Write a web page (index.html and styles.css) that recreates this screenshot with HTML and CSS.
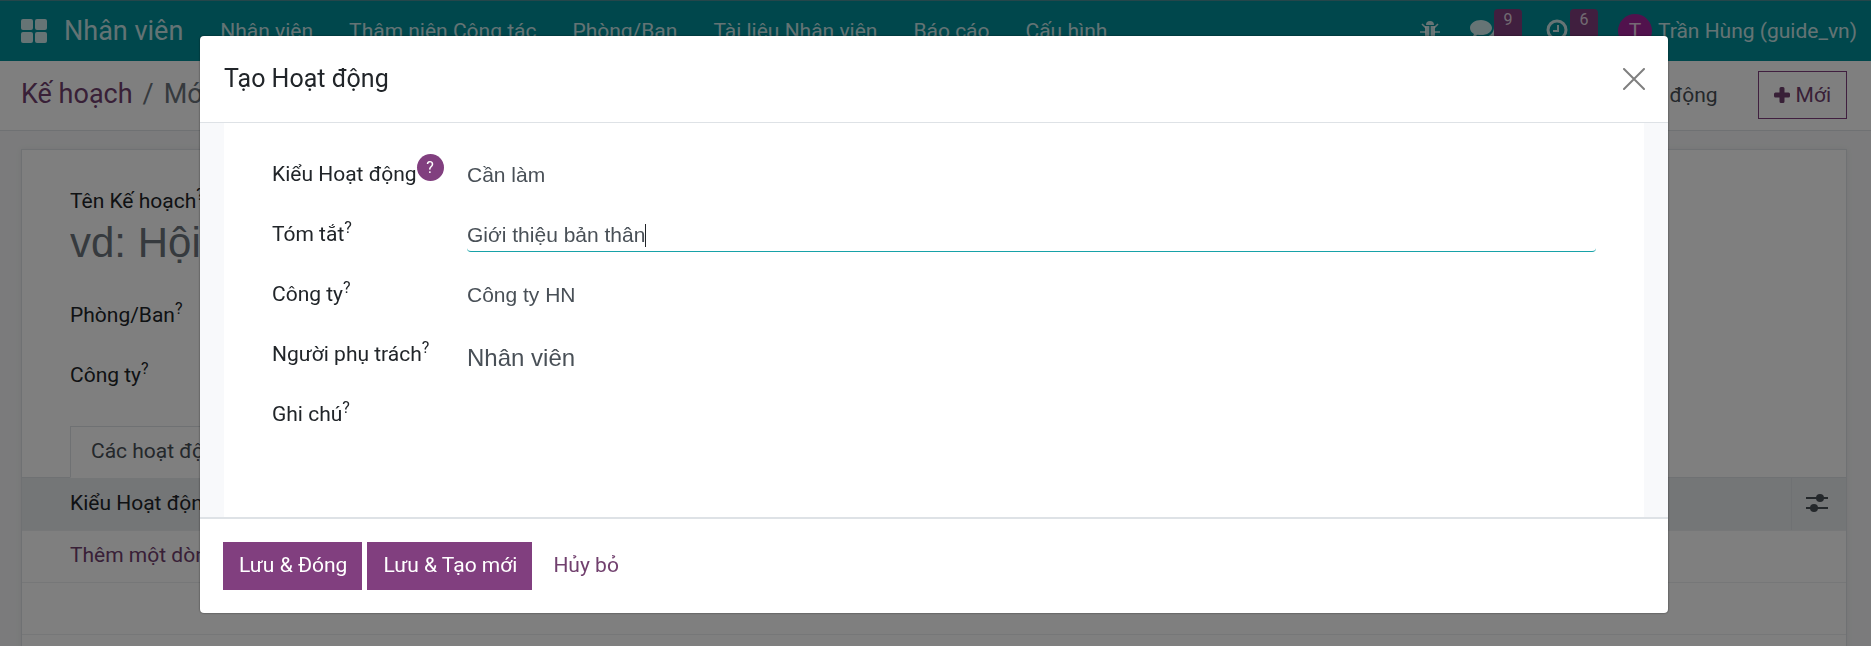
FILE: index.html
```html
<!DOCTYPE html>
<html lang="vi">
<head>
    <meta charset="UTF-8">
    <meta name="viewport" content="width=device-width, initial-scale=1.0">
    <title>Kế hoạch - Nhân viên</title>
    <link rel="stylesheet" href="styles.css">
</head>
<body>
    <div class="app">
        <header class="navbar">
            <button type="button" class="apps-menu" aria-label="Ứng dụng">
                <svg width="26" height="26" viewBox="0 0 26 26" fill="currentColor">
                    <rect x="0" y="1" width="12" height="11" rx="2"/>
                    <rect x="14" y="1" width="12" height="11" rx="2"/>
                    <rect x="0" y="14" width="12" height="11" rx="2"/>
                    <rect x="14" y="14" width="12" height="11" rx="2"/>
                </svg>
            </button>
            <a href="#" class="brand">Nhân viên</a>
            <nav class="menu">
                <a href="#">Nhân viên</a>
                <a href="#">Thâm niên Công tác</a>
                <a href="#">Phòng/Ban</a>
                <a href="#">Tài liệu Nhân viên</a>
                <a href="#">Báo cáo</a>
                <a href="#">Cấu hình</a>
            </nav>
            <div class="systray">
                <button type="button" class="tray-item" aria-label="Gỡ lỗi">
                    <svg width="20" height="22" viewBox="0 0 20 22" fill="currentColor">
                        <path d="M6 5a4 4 0 0 1 8 0z"/>
                        <path d="M5 6h4.300v14C6.500 20 5 17.500 5 14zM10.700 6H15v8c0 3.500-1.500 6-4.300 6z"/>
                        <path d="M2 4l4 4M18 4l-4 4M0 12h6M20 12h-6M2 20l4-4M18 20l-4-4" stroke="currentColor" stroke-width="1.600"/>
                    </svg>
                </button>
                <button type="button" class="tray-item has-badge" aria-label="Hội thoại">
                    <svg width="28" height="24" viewBox="0 0 28 24" fill="currentColor">
                        <path d="M11 1C5 1 0 4.500 0 9c0 2.500 1.600 4.600 4 6-.4 1.300-1.100 2.200-2 3 2.300-.1 4.200-1 5.600-2.200 1.100.2 2.200.3 3.400.3 6 0 11-3.200 11-7.100S17 1 11 1z"/>
                        <path d="M24 8c.3 5.800-5 10.500-12 11 2 1.300 4.500 2 7 2 1 0 2-.1 3-.3 1.300 1.100 3 1.900 5 2-.8-.8-1.400-1.700-1.700-2.800C27 18.800 28 17 28 14.800 28 12 26.500 9.500 24 8z"/>
                    </svg>
                    <span class="badge">9</span>
                </button>
                <button type="button" class="tray-item has-badge" aria-label="Hoạt động">
                    <svg width="24" height="24" viewBox="0 0 24 24" fill="none" stroke="currentColor">
                        <circle cx="11" cy="11" r="9" stroke-width="3"/>
                        <path d="M12 6v6H7" stroke-width="2"/>
                    </svg>
                    <span class="badge">6</span>
                </button>
                <button type="button" class="user-menu"><span class="avatar">T</span>Trần Hùng (guide_vn)</button>
            </div>
        </header>

        <div class="control-panel">
            <div class="breadcrumb">
                <a href="#">Kế hoạch</a>
                <span class="separator">/</span>
                <span>Mới</span>
            </div>
            <div class="actions">
                <button type="button" class="action-menu">Hành động</button>
                <button type="button" class="btn-new">
                    <svg width="16" height="16" viewBox="0 0 16 16" fill="currentColor">
                        <path d="M7 0h2q1.500 0 1.500 1.500v4h4Q16 5.500 16 7v2q0 1.500-1.500 1.500h-4v4Q10.500 16 9 16H7q-1.500 0-1.500-1.500v-4h-4Q0 10.500 0 9V7q0-1.500 1.500-1.500h4v-4Q5.500 0 7 0z"/>
                    </svg>
                    Mới
                </button>
            </div>
        </div>

        <main class="content">
            <div class="sheet">
                <div class="sheet-fields">
                    <label for="planName">Tên Kế hoạch<sup>?</sup></label>
                    <input type="text" id="planName" class="plan-name" placeholder="vd: Hội nhập">
                    <div class="plan-row">
                        <label for="planDepartment">Phòng/Ban<sup>?</sup></label>
                        <input type="text" id="planDepartment">
                    </div>
                    <div class="plan-row">
                        <label for="planCompany">Công ty<sup>?</sup></label>
                        <input type="text" id="planCompany">
                    </div>
                </div>
                <div class="tabs">
                    <a href="#" class="tab">Các hoạt động</a>
                </div>
                <table class="activity-table">
                    <thead>
                        <tr>
                            <th>Kiểu Hoạt động</th>
                            <th class="optional">
                                <svg width="22" height="18" viewBox="0 0 22 18" fill="currentColor">
                                    <path d="M0 3h22v2H0zM0 13h22v2H0z"/>
                                    <circle cx="14" cy="4" r="4"/>
                                    <circle cx="8" cy="14" r="4"/>
                                </svg>
                            </th>
                        </tr>
                    </thead>
                    <tbody>
                        <tr><td colspan="2"><a href="#">Thêm một dòng</a></td></tr>
                        <tr><td colspan="2"></td></tr>
                        <tr><td colspan="2"></td></tr>
                    </tbody>
                </table>
            </div>
        </main>
    </div>

    <div class="backdrop">
        <div class="modal" role="dialog" aria-labelledby="modalTitle">
            <div class="modal-header">
                <h4 id="modalTitle">Tạo Hoạt động</h4>
                <button type="button" class="close" aria-label="Đóng">
                    <svg width="22" height="22" viewBox="0 0 22 22" fill="none" stroke="currentColor" stroke-width="2" stroke-linecap="round">
                        <path d="M1 1l20 20M21 1L1 21"/>
                    </svg>
                </button>
            </div>
            <div class="modal-body">
                <form id="activityForm" class="activity-form">
                    <div class="form-row">
                        <label for="activityType">Kiểu Hoạt động<sup class="help">?</sup></label>
                        <div class="field"><input type="text" id="activityType" value="Cần làm"></div>
                    </div>
                    <div class="form-row">
                        <label for="summary">Tóm tắt<sup>?</sup></label>
                        <div class="field focused">
                            <input type="text" id="summary" value="Giới thiệu bản thân">
                            <span class="caret"></span>
                        </div>
                    </div>
                    <div class="form-row">
                        <label for="company">Công ty<sup>?</sup></label>
                        <div class="field"><input type="text" id="company" value="Công ty HN"></div>
                    </div>
                    <div class="form-row">
                        <label for="responsible">Người phụ trách<sup>?</sup></label>
                        <div class="field"><input type="text" id="responsible" class="large" value="Nhân viên"></div>
                    </div>
                    <div class="form-row note-row">
                        <label for="note">Ghi chú<sup>?</sup></label>
                        <div class="field"><textarea id="note"></textarea></div>
                    </div>
                </form>
            </div>
            <div class="modal-footer">
                <button type="submit" form="activityForm" class="btn btn-primary">Lưu &amp; Đóng</button>
                <button type="button" class="btn btn-primary">Lưu &amp; Tạo mới</button>
                <button type="button" class="btn btn-link">Hủy bỏ</button>
            </div>
        </div>
    </div>
</body>
</html>
```

FILE: styles.css
```css
:root {
    --nav-color: #008f99;
    --primary-color: #813f7f;
    --link-color: #71406e;
    --text-color: #212529;
    --muted-color: #495057;
    --border-color: #dee2e6;
    --background-color: #f6f7f8;
}

* {
    box-sizing: border-box;
}

body {
    margin: 0;
    font-family: Roboto, sans-serif;
    font-size: 21px;
    line-height: 32px;
    color: var(--text-color);
    background-color: var(--background-color);
}

a {
    color: var(--link-color);
    text-decoration: none;
}

button {
    padding: 0;
    border: none;
    background: none;
    color: inherit;
    font: inherit;
    cursor: pointer;
}

svg {
    display: block;
}

input,
textarea {
    width: 100%;
    padding: 0;
    border: none;
    outline: none;
    background: transparent;
    font-family: 'Liberation Sans', Arial, sans-serif;
    font-size: 21px;
    color: var(--muted-color);
}

sup {
    font-size: 16px;
    line-height: 0;
    vertical-align: 8px;
}

.app {
    height: 100vh;
    overflow: hidden;
}

/* Navbar */
.navbar {
    display: flex;
    align-items: center;
    height: 61px;
    padding: 0 14px 0 21px;
    background-color: var(--nav-color);
    border-top: 1px solid #4a8d94;
    color: rgba(255, 255, 255, 0.8);
    white-space: nowrap;
}

.navbar a {
    color: inherit;
}

.brand {
    margin: 0 19px 0 17px;
    font-size: 27px;
}

.menu {
    display: flex;
}

.menu a {
    padding: 0 18px;
}

.systray {
    display: flex;
    align-items: center;
    margin-left: auto;
}

.tray-item {
    position: relative;
    margin-right: 30px;
}

.has-badge {
    margin-right: 48px;
}

.badge {
    position: absolute;
    top: -10px;
    left: 24px;
    width: 28px;
    height: 30px;
    border-radius: 4px;
    background-color: var(--primary-color);
    font-size: 16px;
    line-height: 22px;
}

.user-menu {
    display: flex;
    align-items: center;
    gap: 6px;
}

.avatar {
    width: 34px;
    height: 34px;
    border-radius: 50%;
    background-color: #a3249b;
    line-height: 34px;
    text-align: center;
}

/* Control panel */
.control-panel {
    display: flex;
    align-items: flex-start;
    justify-content: space-between;
    height: 70px;
    padding: 10px 24px 0 21px;
    background-color: #ffffff;
    border-bottom: 1px solid var(--border-color);
}

.breadcrumb {
    display: flex;
    gap: 10px;
    padding-top: 7px;
    font-size: 27px;
    color: #6c757d;
}

.actions {
    display: flex;
    align-items: center;
    gap: 40px;
    color: var(--muted-color);
}

.btn-new {
    display: flex;
    align-items: center;
    gap: 6px;
    padding: 7px 15px;
    border: 1px solid var(--primary-color);
    color: var(--link-color);
}

/* Form sheet */
.content {
    padding: 18px 24px 0 21px;
}

.sheet {
    min-height: 600px;
    background-color: #ffffff;
    border: 1px solid var(--border-color);
    box-shadow: 0 0 6px rgba(0, 0, 0, 0.06);
}

.sheet-fields {
    display: flex;
    flex-direction: column;
    height: 276px;
    padding: 35px 48px 0;
}

.plan-name {
    height: 52px;
    margin-bottom: 16px;
    font-size: 42px;
}

.plan-name::placeholder {
    color: #6c757d;
    opacity: 1;
}

.plan-row {
    display: grid;
    grid-template-columns: 195px 1fr;
    align-items: center;
    height: 60px;
}

.tabs {
    display: flex;
    height: 52px;
    padding: 0 48px;
    border-bottom: 1px solid var(--border-color);
}

.tab {
    height: 52px;
    padding: 8px 20px;
    border: 1px solid var(--border-color);
    border-bottom-color: #ffffff;
    background-color: #ffffff;
    color: var(--muted-color);
}

.activity-table {
    width: 100%;
    border-collapse: collapse;
}

.activity-table th,
.activity-table td {
    height: 52px;
    padding: 0 48px 2px;
    border-bottom: 1px solid #eceef0;
    text-align: left;
}

.activity-table th {
    background-color: #e9ecef;
    font-weight: normal;
}

.activity-table .optional {
    width: 55px;
    padding: 0 14px 2px;
    border-left: 1px solid var(--border-color);
    color: var(--muted-color);
}

/* Modal */
.backdrop {
    position: fixed;
    inset: 0;
    display: flex;
    align-items: flex-start;
    justify-content: center;
    padding: 36px 3px 0 0;
    background-color: rgba(0, 0, 0, 0.5);
}

.modal {
    width: 100%;
    max-width: 1468px;
    overflow: hidden;
    border-radius: 4px;
    background-color: #ffffff;
    box-shadow: 0 0 2px rgba(0, 0, 0, 0.6);
}

.modal-header {
    display: flex;
    align-items: center;
    justify-content: space-between;
    padding: 27px 23px 27px 24px;
    border-bottom: 1px solid var(--border-color);
}

.modal-header h4 {
    margin: 0;
    font-size: 25px;
    font-weight: normal;
}

.close {
    color: #7f7f7f;
}

.modal-body {
    padding: 0 24px;
    background-color: #f8f9fb;
}

.activity-form {
    padding: 21px 48px 0;
    background-color: #ffffff;
}

.form-row {
    display: grid;
    grid-template-columns: 195px 1fr;
    align-items: center;
    height: 60px;
    white-space: nowrap;
}

.note-row {
    align-items: start;
    height: 133px;
    padding-top: 14px;
}

.field {
    position: relative;
}

.field input {
    display: block;
    height: 36px;
    padding-top: 3px;
    border-bottom: 1px solid transparent;
    border-radius: 4px;
}

.field .large {
    padding-top: 8px;
    font-size: 24px;
}

.field textarea {
    display: block;
    height: 90px;
    resize: none;
}

.focused input {
    border-bottom-color: #17a2a8;
}

/* text cursor of the focused field */
.caret {
    position: absolute;
    top: 8px;
    left: 178px;
    width: 1px;
    height: 23px;
    background-color: var(--text-color);
}

.help {
    display: inline-block;
    width: 27px;
    height: 27px;
    margin: -8px 0;
    border-radius: 50%;
    background-color: var(--primary-color);
    color: #ffffff;
    line-height: 27px;
    text-align: center;
}

.modal-footer {
    display: flex;
    gap: 5px;
    padding: 23px;
    border-top: 2px solid var(--border-color);
}

.btn {
    padding: 7px 15px 9px 16px;
}

.btn-primary {
    background-color: var(--primary-color);
    color: #ffffff;
}

.btn-link {
    color: var(--link-color);
}
```
